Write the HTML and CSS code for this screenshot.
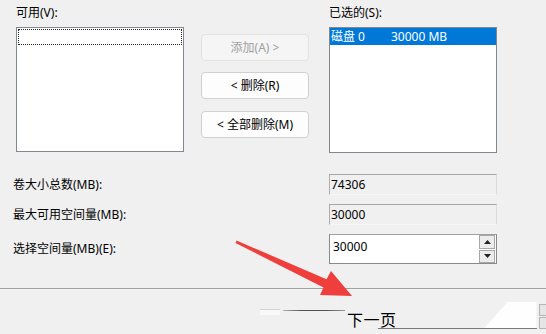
FILE: index.html
```html
<!DOCTYPE html>
<html lang="zh-CN">
<head>
<meta charset="utf-8">
<title>选择磁盘</title>
<link rel="stylesheet" href="styles.css">
</head>
<body>
<div class="page">
  <div class="top">
    <div class="col">
      <div class="label">可用(V):</div>
      <div class="list"><div class="focus-row"></div></div>
    </div>
    <div class="actions">
      <div class="btn disabled">添加(A) &gt;</div>
      <div class="btn">&lt; 删除(R)</div>
      <div class="btn btn3">&lt; 全部删除(M)</div>
    </div>
    <div class="col">
      <div class="label">已选的(S):</div>
      <div class="list list-r"><div class="sel-row"><span class="c1">磁盘 0</span><span>30000 MB</span></div></div>
    </div>
  </div>

  <div class="fields">
    <div class="flabel">卷大小总数(MB):</div>
    <div class="field ro">74306</div>
    <div class="flabel">最大可用空间量(MB):</div>
    <div class="field ro">30000</div>
    <div class="flabel">选择空间量(MB)(E):</div>
    <div class="field edit">
      <div class="val">30000</div>
      <div class="spin">
        <div class="sbtn"><svg width="7" height="4" viewBox="0 0 7 4"><path d="M0 4 L3.5 0 L7 4 Z" fill="#222"/></svg></div>
        <div class="sbtn"><svg width="7" height="4" viewBox="0 0 7 4"><path d="M0 0 L3.5 4 L7 0 Z" fill="#222"/></svg></div>
      </div>
    </div>
  </div>

  <div class="sep"></div>

  <div class="footer">
    <div class="stub"></div>
    <div class="line1"></div>
    <div class="next">下一页</div>
    <div class="tail"><div class="blob"></div></div>
    <div class="stub2"><div></div><div></div></div>
  </div>
</div>

<svg class="arrow" width="546" height="334" viewBox="0 0 546 334">
  <polygon points="236.5,240.5 326.5,279.2 331,271 352,296 320,295 323.5,287.5 235.5,243" fill="#ef3f3d"/>
</svg>
</body>
</html>
```

FILE: styles.css
```css
* { box-sizing: border-box; }

html, body {
  margin: 0;
  padding: 0;
}

body {
  width: 546px;
  height: 334px;
  overflow: hidden;
  position: relative;
  background: #f0f0f0;
  color: #000;
  font-family: "Noto Sans", "Noto Sans CJK SC", sans-serif;
  font-size: 12px;
}

.page {
  padding-top: 5px;
}

.top {
  display: flex;
  align-items: flex-start;
  padding-left: 16px;
}

.col {
  display: flex;
  flex-direction: column;
}

.col:first-child { width: 168px; }
.col:last-child { width: 168px; }

.label {
  line-height: 16px;
  height: 16px;
}

.list {
  margin-top: 6px;
  height: 125px;
  background: #fff;
  border: 1px solid #828790;
  padding: 1px;
}

.list-r {
  padding: 0;
  height: 126px;
}

.focus-row {
  height: 16px;
  border: 1px dotted #222;
}

.sel-row {
  height: 17px;
  background: #0078d7;
  color: #fff;
  line-height: 17px;
  padding-left: 1px;
  display: flex;
}

.sel-row .c1 { width: 60px; }

.actions {
  width: 108px;
  margin: 29px 20px 0 17px;
  display: flex;
  flex-direction: column;
  gap: 11px;
}

.btn {
  height: 27px;
  line-height: 25px;
  text-align: center;
  background: #fdfdfd;
  border: 1px solid #d0d0d0;
  border-radius: 4px;
}

.btn3 { margin-top: 1px; }

.btn.disabled {
  background: #f5f5f5;
  border-color: #e2e2e2;
  color: #a0a0a0;
}

.fields {
  margin-top: 21px;
  padding-left: 13px;
  display: grid;
  grid-template-columns: 316px 168px;
  row-gap: 9px;
  align-items: center;
}

.flabel {
  line-height: 16px;
}

.field {
  height: 21px;
}

.field.ro {
  background: #f0f0f0;
  border-top: 1px solid #a6a6a6;
  border-left: 1px solid #acacac;
  border-right: 1px solid #dcdcdc;
  border-bottom: 1px solid #f7f7f7;
  padding-left: 1px;
  line-height: 19px;
}

.field.edit {
  height: 30px;
  background: #fff;
  border: 1px solid #8a8a8a;
  border-top-color: #a0a0a0;
  display: flex;
  padding: 0 1px 0 3px;
}

.field.edit .val {
  flex: 1;
  line-height: 18px;
  padding-top: 3px;
}

.spin {
  width: 16px;
  display: flex;
  flex-direction: column;
  gap: 1px;
}

.sbtn {
  height: 13.5px;
  background: #ececec;
  border: 1px solid #a8a8a8;
  display: flex;
  align-items: center;
  justify-content: center;
}

.sbtn svg { display: block; }

.sep {
  margin-top: 24px;
  height: 2px;
  border-top: 1px solid #a0a0a0;
  border-bottom: 1px solid #f6f6f6;
}

.footer {
  display: flex;
  align-items: flex-start;
}

.footer > * { flex-shrink: 0; }

.stub {
  margin-left: 260px;
  margin-top: 19px;
  width: 20px;
  height: 6px;
  background: #f9f9f9;
  border-top: 1px solid #d4d4d4;
}

.line1 {
  margin-left: 3px;
  margin-top: 20px;
  width: 62px;
  height: 1px;
  background: linear-gradient(to right, #b0b0b0, #555 30%, #555 70%, #9a9a9a);
}

.next {
  margin-left: 2px;
  margin-top: 18px;
  font-family: "Noto Sans CJK SC", sans-serif;
  font-size: 16px;
  line-height: 22px;
  white-space: nowrap;
  letter-spacing: 0.5px;
}

.tail {
  margin-left: -19px;
  margin-top: 12px;
  width: 159px;
  height: 27px;
  border-bottom: 1px solid #7a7a7a;
  display: flex;
  justify-content: flex-end;
}

.blob {
  width: 55px;
  height: 26px;
  background: #fefefe;
  clip-path: polygon(26px 0, 100% 0, 100% 100%, 3px 100%);
}

.stub2 {
  margin-left: 2px;
  margin-top: 14px;
  width: 8px;
  height: 25px;
  display: flex;
  flex-direction: column;
  gap: 1px;
}

.stub2 div {
  flex: 1;
  background: #e6e6e6;
  border: 1px solid #b4b4b4;
  border-right: 0;
}

.arrow {
  position: absolute;
  left: 0;
  top: 0;
  pointer-events: none;
}
```
